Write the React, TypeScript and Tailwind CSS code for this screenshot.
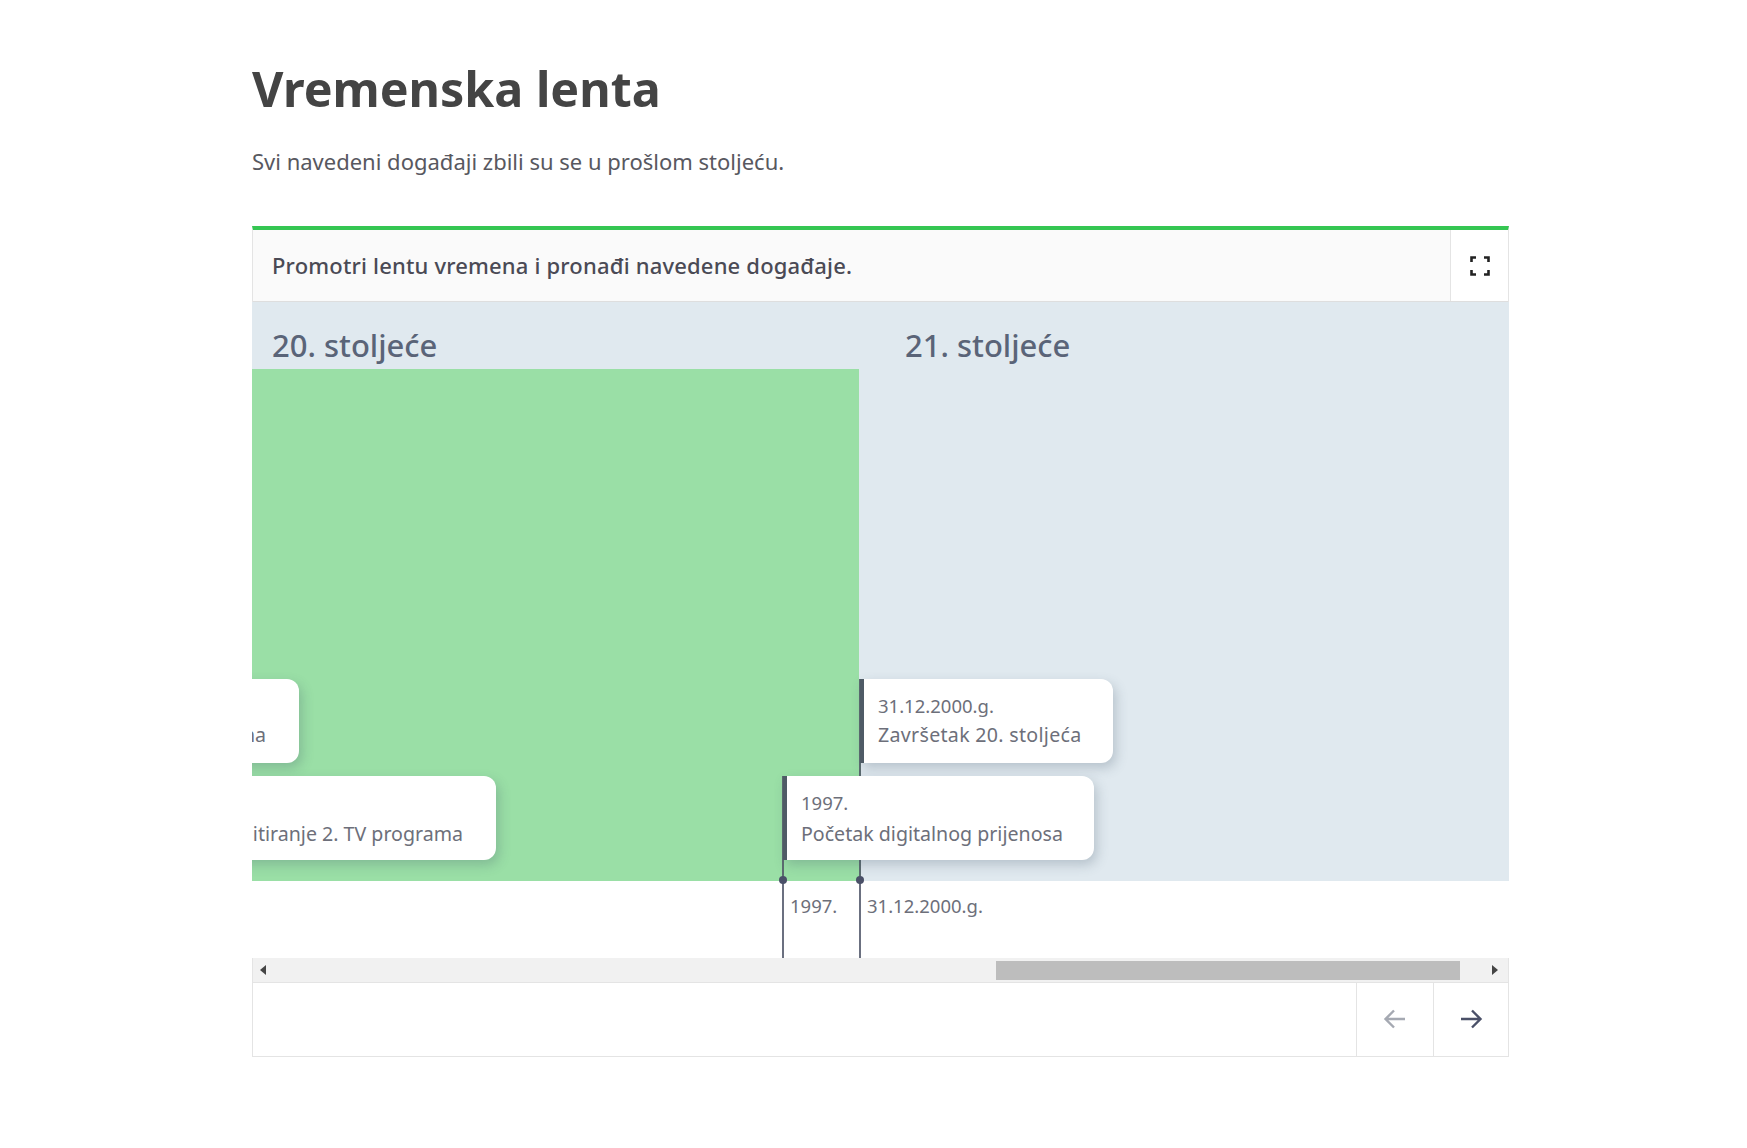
import React from "react";

const font = { fontFamily: '"Noto Sans", "Open Sans", Arial, sans-serif' };

function EventCard({ className, date, title, bar = true, titleClass = "" }: { className: string; date?: string; title: string; bar?: boolean; titleClass?: string }) {
  return (
    <div className={`absolute flex h-[84px] flex-col justify-end overflow-hidden whitespace-nowrap rounded-r-[12px] bg-white text-[#6d6f7a] shadow-[3px_5px_12px_rgba(60,80,100,0.25)] ${bar ? "border-l-[4px] border-[#4f5b66] pl-[14px]" : "items-end pr-[33px]"} ${className}`}>
      {date ? <div className="text-[18.5px] leading-[29px]">{date}</div> : null}
      <div className={`text-[19.6px] leading-[30px] ${titleClass}`}>{title}</div>
    </div>
  );
}

function Tick({ className, label }: { className: string; label: string }) {
  return (
    <div className={`absolute top-[-1px] h-[78px] w-[2px] bg-[#6b7080] ${className}`}>
      <div className="absolute left-[-3px] top-[-4px] h-2 w-2 rounded-full bg-[#4a5068]" />
      <div className="absolute left-[8px] top-[12px] text-[18.5px] leading-[28px] text-[#6d6f7a]">{label}</div>
    </div>
  );
}

export default function App() {
  return (
    <div className="min-h-[1148px] bg-white pl-[252px] pr-[237px] pt-[52px]" style={font}>
      <h1 className="text-[48.4px] font-bold leading-[72px] text-[#444444]">Vremenska lenta</h1>
      <p className="mt-[21px] text-[22px] leading-[32px] text-[#58585f]">Svi navedeni događaji zbili su se u prošlom stoljeću.</p>

      <div className="mt-[49px] w-[1257px] border-x border-b border-[#e4e4e4] border-t-[4px] border-t-[#35c652]">
        <div className="flex h-[72px] border-b border-[#dedede] bg-[#fafafa]">
          <div className="flex-1 pl-[19px] text-[22px] font-medium leading-[71px] tracking-[0.18px] text-[#4a4a55]">Promotri lentu vremena i pronađi navedene događaje.</div>
          <div className="flex w-[58px] items-center justify-center border-l border-[#e4e4e4] bg-white">
            <svg width="20" height="20" viewBox="0 0 20 20" fill="none" stroke="#222" strokeWidth="2.6">
              <path d="M1.5 6V1.5H6M14 1.5h4.5V6M18.5 14v4.5H14M6 18.5H1.5V14" />
            </svg>
          </div>
        </div>

        <div className="relative -mx-px h-[579px] overflow-hidden bg-[#e0e9ef]">
          <div className="flex h-[67px] items-center pt-[20px] text-[31px] font-medium text-[#5a6478]">
            <div className="w-[653px] pl-[20px]">20. stoljeće</div>
            <div>21. stoljeće</div>
          </div>
          <div className="absolute left-0 top-[67px] h-[512px] w-[607px] bg-[#9adfa6]" />
          <div className="absolute left-[607px] top-[377px] h-[202px] w-[2px] bg-[#5c6b70]" />
          <div className="absolute left-[530px] top-[474px] h-[105px] w-[2px] bg-[#5c6b70]" />
          <EventCard className="left-[-200px] top-[377px] w-[247px] pb-[13px]" title="na" bar={false} />
          <EventCard className="left-[-300px] top-[474px] w-[544px] pb-[11px]" title="itiranje 2. TV programa" bar={false} />
          <EventCard className="left-[608px] top-[377px] w-[253px] pb-[13px]" date="31.12.2000.g." title="Završetak 20. stoljeća" titleClass="tracking-[0.3px]" />
          <EventCard className="left-[531px] top-[474px] w-[311px] pb-[11px]" date="1997." title="Početak digitalnog prijenosa" titleClass="mt-[2px]" />
        </div>

        <div className="relative -mx-px h-[77px] bg-white">
          <Tick className="left-[530px]" label="1997." />
          <Tick className="left-[607px]" label="31.12.2000.g." />
        </div>

        <div className="flex h-[24px] items-center bg-[#f1f1f1]">
          <div className="flex w-[20px] justify-center">
            <div className="h-0 w-0 border-y-[5px] border-r-[6px] border-y-transparent border-r-[#444]" />
          </div>
          <div className="ml-[723px] h-[19px] w-[464px] bg-[#bdbdbd]" />
          <div className="ml-auto flex w-[25px] justify-center pr-[2px]">
            <div className="h-0 w-0 border-y-[5px] border-l-[6px] border-y-transparent border-l-[#444]" />
          </div>
        </div>

        <div className="flex h-[74px] justify-end border-t border-[#e4e4e4] bg-white">
          <div className="flex w-[77px] items-center justify-center border-l border-[#e4e4e4] pb-[1px]">
            <svg width="24" height="24" viewBox="0 0 24 24" fill="none" stroke="#a5a9b2" strokeWidth="2.4">
              <path d="M22 12H2.5M11 3.5L2.5 12l8.5 8.5" />
            </svg>
          </div>
          <div className="flex w-[75px] items-center justify-center border-l border-[#e4e4e4] pb-[1px] pr-[1px]">
            <svg width="24" height="24" viewBox="0 0 24 24" fill="none" stroke="#4a5068" strokeWidth="2.4">
              <path d="M2 12h19.5M13 3.5l8.5 8.5-8.5 8.5" />
            </svg>
          </div>
        </div>
      </div>
    </div>
  );
}
